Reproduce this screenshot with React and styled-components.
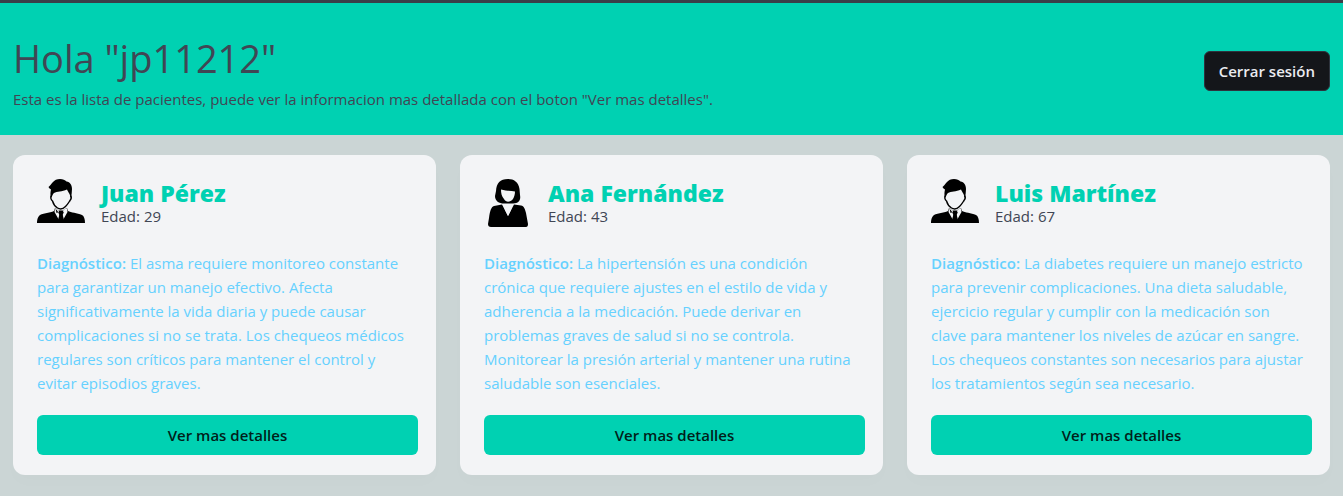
import React from "react";
import styled, { createGlobalStyle } from "styled-components";

const GlobalStyle = createGlobalStyle`
  *, *::before, *::after { box-sizing: border-box; }
  body {
    margin: 0;
    background: #cbd5d5;
    color: #404654;
    font-family: "Segoe UI", "Open Sans", "Noto Sans", sans-serif;
    font-size: 15px;
    line-height: 24px;
  }
  h1, h2, p { margin: 0; }
  strong { font-weight: 600; }
`;

const Header = styled.header`
  display: flex;
  align-items: center;
  justify-content: space-between;
  padding: 28px 13px 24px;
  border-top: 3px solid #3a3e48;
  background: #00d1b2;
`;

const Title = styled.h1`
  padding-bottom: 2px;
  font-size: 38px;
  font-weight: 400;
  line-height: 54px;
`;

const LogoutButton = styled.button`
  height: 40px;
  padding: 0 14px;
  border: 1px solid #2e333d;
  border-radius: 6px;
  background: #14161a;
  color: #ebecf0;
  font: inherit;
  font-weight: 600;
  cursor: pointer;
`;

const PatientGrid = styled.main`
  display: grid;
  grid-template-columns: repeat(3, minmax(0, 1fr));
  gap: 24px;
  padding: 20px 13px;
`;

const Card = styled.article`
  display: flex;
  flex-direction: column;
  padding: 24px 18px 20px 24px;
  border-radius: 12px;
  background: #f3f4f6;
  box-shadow: 0 8px 16px rgba(10, 10, 10, 0.01);
`;

const CardHeader = styled.div`
  display: flex;
  gap: 16px;
  height: 72px;
`;

const Name = styled.h2`
  padding-top: 3px;
  color: #00d1b2;
  font-size: 23px;
  font-weight: 800;
  line-height: 22px;
`;

const Avatar = styled.svg`
  width: 48px;
  height: 48px;
  flex: none;
`;

const Diagnosis = styled.p`
  flex: 1;
  padding: 0 4px 20px 0;
  color: #66d1ff;
`;

const DetailsButton = styled.button`
  height: 40px;
  border: 0;
  border-radius: 6px;
  background: #00d1b2;
  color: #001f1a;
  font: inherit;
  font-weight: 600;
  cursor: pointer;
`;

const ManIcon = () => (
  <Avatar viewBox="0 0 48 48" aria-hidden="true">
    <path d="M14 19C13 15 13.500 13 14 10.500C13 10 12 9 11.500 8C13 7 14 5 15.500 3.500C17.500 1 20 0 23 0C26 0 28 1 29.500 2.500C33 3 35 6 35 10C35 13 34.500 16 34 19L32.500 15C31.500 13 30.500 12 30 10.500C25 13 20 12 17 14C15.500 15 15.500 17 14 19Z" />
    <path d="M14.500 16.500C13 18 14 21 15.500 22C16.500 25.500 18 27.500 20.500 29C23 30.500 26 30 28.500 27.500C31 25 32 23 33 21.500C34.500 20 34.500 18 33.500 16.500" fill="none" stroke="#000" strokeWidth="1.4" />
    <path d="M18 29L17 32C13 34 4 34 2 37C0 39 0 44 0 44H48C48 40 47 37 45 36C40 34 34 33.500 31 32L30 29L24 32Z" />
    <path d="M18 29L17.500 33L22 41L22.500 36L20.500 32Z M30 29L30.500 33L26 41L25.500 36L27.500 32Z M18.500 29.500L24 31.500L29.500 29.500L28.500 34L26 33H22L19.500 34Z" fill="#f3f4f6" />
    <path d="M21.500 31.500H26.500L25.500 35L27 41L24 44L21 41L22.500 35Z" />
  </Avatar>
);

const WomanIcon = () => (
  <Avatar viewBox="0 0 48 48" aria-hidden="true">
    <path d="M24 0C16 0 12.500 4 12 12L11 17C11 22 15 24.500 20 24.500H29C35 24.500 37 21 36 16L35.500 10C34.500 3 30 0 24 0Z" />
    <path d="M17 10.500C22 12 27 11.500 31 12.500C31 16 30 18 29 20C26 23.500 22 23.500 20 20C17.500 17 17 14 17 10.500Z" fill="#f3f4f6" />
    <path d="M18 25.500L10 27C7 28 6 32 5 39L4 45Q4 48 7 48H42Q44 48 44 45L42 34C41 30 40 27 37 26.500L30 25.500L24 37Z" />
    <path d="M20 26H28L27 31L24 37L21 31Z" fill="#f3f4f6" />
  </Avatar>
);

const patients = [
  {
    name: "Juan Pérez",
    age: 29,
    Icon: ManIcon,
    diagnosis:
      "El asma requiere monitoreo constante para garantizar un manejo efectivo. Afecta significativamente la vida diaria y puede causar complicaciones si no se trata. Los chequeos médicos regulares son críticos para mantener el control y evitar episodios graves.",
  },
  {
    name: "Ana Fernández",
    age: 43,
    Icon: WomanIcon,
    diagnosis:
      "La hipertensión es una condición crónica que requiere ajustes en el estilo de vida y adherencia a la medicación. Puede derivar en problemas graves de salud si no se controla. Monitorear la presión arterial y mantener una rutina saludable son esenciales.",
  },
  {
    name: "Luis Martínez",
    age: 67,
    Icon: ManIcon,
    diagnosis:
      "La diabetes requiere un manejo estricto para prevenir complicaciones. Una dieta saludable, ejercicio regular y cumplir con la medicación son clave para mantener los niveles de azúcar en sangre. Los chequeos constantes son necesarios para ajustar los tratamientos según sea necesario.",
  },
];

export default function App() {
  return (
    <>
      <GlobalStyle />
      <Header>
        <div>
          <Title>Hola "jp11212"</Title>
          <p>
            Esta es la lista de pacientes, puede ver la informacion mas
            detallada con el boton "Ver mas detalles".
          </p>
        </div>
        <LogoutButton type="button">Cerrar sesión</LogoutButton>
      </Header>
      <PatientGrid>
        {patients.map(({ name, age, Icon, diagnosis }) => (
          <Card key={name}>
            <CardHeader>
              <Icon />
              <div>
                <Name>{name}</Name>
                <p>Edad: {age}</p>
              </div>
            </CardHeader>
            <Diagnosis>
              <strong>Diagnóstico:</strong> {diagnosis}
            </Diagnosis>
            <DetailsButton type="button">Ver mas detalles</DetailsButton>
          </Card>
        ))}
      </PatientGrid>
    </>
  );
}
